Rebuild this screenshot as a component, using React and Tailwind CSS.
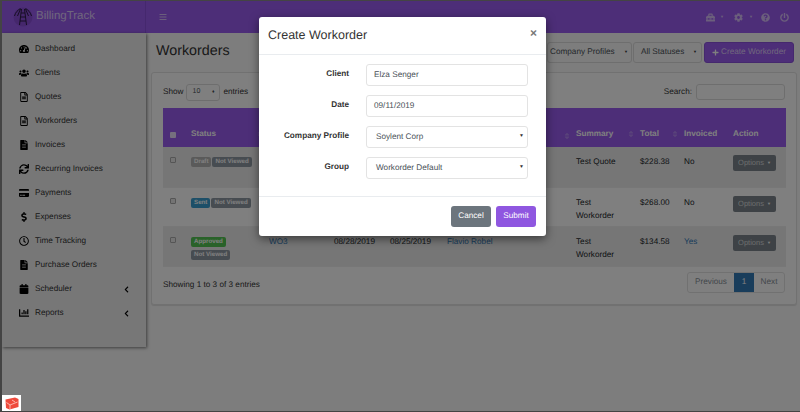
import React from 'react';
import {
  FaTachometerAlt, FaUsers, FaFileAlt, FaRegFileAlt, FaSync, FaCreditCard, FaDollarSign, FaRegClock,
  FaCalendar, FaChartBar, FaChevronLeft, FaBars, FaToolbox, FaCog, FaQuestionCircle,
  FaPowerOff, FaPlus, FaSort,
} from 'react-icons/fa';

const font = { fontFamily: '"Liberation Sans", Arial, sans-serif' };

const navItems = [
  { name: 'Dashboard', icon: FaTachometerAlt },
  { name: 'Clients', icon: FaUsers },
  { name: 'Quotes', icon: FaRegFileAlt },
  { name: 'Workorders', icon: FaRegFileAlt },
  { name: 'Invoices', icon: FaFileAlt },
  { name: 'Recurring Invoices', icon: FaSync },
  { name: 'Payments', icon: FaCreditCard },
  { name: 'Expenses', icon: FaDollarSign },
  { name: 'Time Tracking', icon: FaRegClock },
  { name: 'Purchase Orders', icon: FaFileAlt },
  { name: 'Scheduler', icon: FaCalendar, more: true },
  { name: 'Reports', icon: FaChartBar, more: true },
];

// the first two rows have their id, dates and client behind the modal
const rows = [
  { badges: [['Draft', 'bg-[#b4b4b4]'], ['Not Viewed', 'bg-[#8f99a3]']], key: 'r1', summary: 'Test Quote', total: '$228.38', invoiced: 'No', striped: true, h: 'h-[40px]' },
  { badges: [['Sent', 'bg-[#3a9fd0]'], ['Not Viewed', 'bg-[#8f99a3]']], key: 'r2', summary: 'Test Workorder', total: '$268.00', invoiced: 'No', h: 'h-[39px]' },
  { badges: [['Approved', 'bg-[#52c552]'], ['Not Viewed', 'bg-[#8f99a3]']], key: 'r3', id: 'WO3', a: '08/28/2019', b: '08/25/2019', client: 'Flavio Robel', summary: 'Test Workorder', total: '$134.58', invoiced: 'Yes', striped: true, wrap: true, h: 'h-[40px]' },
];

function Logo() {
  return (
    <svg width="20" height="20" viewBox="0 0 20 20" className="shrink-0">
      <circle cx="10" cy="10" r="9.500" fill="#8a4fd8" />
      <g stroke="#2b1b45" strokeWidth="1" fill="none">
        <path d="M8.500 2 L6.500 18 M11.500 2 L13.500 18 M8 6 H12 M7.500 10 H12.500 M7 14 H13" />
        <path d="M7.500 1.500 C5 3 2.500 5 1.500 9 M12.500 1.500 C15 3 17.500 5 18.500 9 M7.500 2 L4.500 9 M12.500 2 L15.500 9" />
      </g>
    </svg>
  );
}

function Th({ w, children, sort }) {
  return (
    <th className={`${w} p-0 pb-[7px] align-bottom text-left font-bold text-[8.2px]`}>
      <div className="flex items-center justify-between pr-[5px]">
        <span>{children}</span>
        {sort && <FaSort className="text-[8px] text-white/25" />}
      </div>
    </th>
  );
}

function Field({ label, children }) {
  return (
    <div className="flex items-start">
      <label className="w-[90px] text-right text-[8.2px] font-bold text-[#333] pt-[4px]">{label}</label>
      <div className="ml-[17px] w-[162px]">{children}</div>
    </div>
  );
}

function FakeSelect({ value }) {
  return (
    <div className="h-[22px] rounded-[3px] border border-[#e3e3e3] flex items-center justify-between pl-[9px] pr-[3px] text-[8.2px] text-[#495057]">
      <span>{value}</span>
      <span className="text-[5px] text-[#333]">▼</span>
    </div>
  );
}

export default function App() {
  return (
    <div className="relative w-[800px] h-[412px] overflow-hidden bg-[#fafafa] text-[#212529] border-l-2 border-t border-b border-[#444] [text-rendering:geometricPrecision]" style={font}>
      {/* Top bar */}
      <header className="h-[32px] bg-[#9a5cf0] flex items-center text-white">
        <div className="w-[144px] h-full flex items-center pl-[11px] gap-[3px] border-r border-[#8a50dc]">
          <Logo />
          <span className="text-[11.500px] text-white/70">BillingTrack</span>
        </div>
        <FaBars className="ml-[13px] text-[8px] text-white/60" />
        <div className="ml-auto flex items-center pr-[11px] text-[9px] text-white/60">
          <FaToolbox />
          <span className="ml-[5px] text-[4px]">▼</span>
          <FaCog className="ml-[10px]" />
          <span className="ml-[6px] text-[4px]">▼</span>
          <FaQuestionCircle className="ml-[8px]" />
          <FaPowerOff className="ml-[10px]" />
        </div>
      </header>

      <div className="flex">
        {/* Sidebar */}
        <aside className="w-[144px] h-[314px] bg-[#eeeeee] shadow-[1px_1px_3px_rgba(0,0,0,0.5)] pt-[4px] shrink-0 z-10">
          {navItems.map((item) => (
            <div key={item.name} className="h-[24px] flex items-center pl-[14px] pr-[16px] text-[8.2px] text-[#333]">
              <span className="w-[16px] flex justify-center text-[10px] text-black"><item.icon /></span>
              <span className="ml-[3px]">{item.name}</span>
              {item.more && <FaChevronLeft className="ml-auto text-[7px] text-black" />}
            </div>
          ))}
        </aside>

        {/* Content */}
        <main className="flex-1 min-w-0 pl-[5px] pr-[3px]">
          <div className="h-[36px] flex items-center pt-[2px] pl-[5px]">
            <h1 className="text-[14.300px] text-[#333] font-normal">Workorders</h1>
            <div className="ml-auto flex items-center text-[8.2px] text-[#495057] mr-[3px]">
              <div className="w-[85px] h-[21px] rounded-[3px] border border-[#ddd] flex items-center justify-between pl-[2px] pr-[3px]">
                <span>Company Profiles</span><span className="text-[4px] text-[#333]">▼</span>
              </div>
              <div className="ml-[1px] w-[69px] h-[21px] rounded-[3px] border border-[#ddd] flex items-center justify-between pl-[7px] pr-[4px]">
                <span>All Statuses</span><span className="text-[4px] text-[#333]">▼</span>
              </div>
              <div className="ml-[2px] w-[90px] h-[21px] rounded-[3px] bg-[#9a5cf0] border border-[#8a50dc] flex items-center justify-center gap-[2px] text-white/70">
                <FaPlus className="text-[7px] text-white" /><span>Create Workorder</span>
              </div>
            </div>
          </div>

          <section className="h-[233px] rounded-[3px] border border-[#e3e3e3] bg-white px-[11px] pt-[11px] mt-[3px] shadow-[0_1px_1px_rgba(0,0,0,0.1)]">
            <div className="h-[24px] flex items-start justify-between text-[8.2px] text-[#333]">
              <div className="flex items-center gap-[3px]">
                <span>Show</span>
                <div className="w-[34px] h-[17px] rounded-[3px] border border-[#ddd] flex items-center justify-between px-[5px] text-[7px] text-[#495057]">
                  <span>10</span><span className="text-[5px]">♦</span>
                </div>
                <span>entries</span>
              </div>
              <div className="flex items-center gap-[4px]">
                <span>Search:</span>
                <div className="w-[89px] h-[16px] rounded-[3px] border border-[#ddd]" />
              </div>
            </div>

            <table className="w-[623px] table-fixed border-collapse text-[8.2px] text-[#212529]">
              <thead className="bg-[#9a5cf0] text-white">
                <tr className="h-[39px]">
                  <th className="w-[28px] p-0 pb-[9px] align-bottom"><div className="ml-[7px] w-[6px] h-[6px] rounded-[1px] bg-white/80" /></th>
                  <Th w="w-[78px]" sort>Status</Th>
                  <Th w="w-[65px]" />
                  <Th w="w-[56px]" />
                  <Th w="w-[57px]" />
                  <Th w="w-[129px]" sort />
                  <Th w="w-[64px]" sort>Summary</Th>
                  <Th w="w-[44px]" sort>Total</Th>
                  <Th w="w-[49px]">Invoiced</Th>
                  <Th w="w-[53px]">Action</Th>
                </tr>
              </thead>
              <tbody>
                {rows.map((row) => (
                  <tr key={row.key} className={`${row.h} border-b border-[#eee] align-top ${row.striped ? 'bg-[#ededed]' : ''}`}>
                    <td className="p-0 pt-[10px]"><div className="ml-[7px] w-[6px] h-[6px] rounded-[1px] border border-[#aaa] bg-[#e8e8e8]" /></td>
                    <td className="p-0 pt-[10px]">
                      <div className={`flex ${row.wrap ? 'flex-col items-start gap-[3px]' : 'gap-[1px]'} text-[6.200px] font-bold text-white leading-none`}>
                        {row.badges.map(([t, c]) => (
                          <span key={t} className={`${c} rounded-[2px] px-[3px] py-[2px] whitespace-nowrap`}>{t}</span>
                        ))}
                      </div>
                    </td>
                    <td className="p-0 pt-[9px] text-[#337ab7]">{row.id}</td>
                    <td className="p-0 pt-[9px]">{row.a}</td>
                    <td className="p-0 pt-[9px]">{row.b}</td>
                    <td className="p-0 pt-[9px] text-[#337ab7]">{row.client}</td>
                    <td className="p-0 pt-[8px] leading-[13px] pr-[18px]">{row.summary}</td>
                    <td className="p-0 pt-[9px]">{row.total}</td>
                    <td className={`p-0 pt-[9px] ${row.invoiced === 'Yes' ? 'text-[#337ab7]' : ''}`}>{row.invoiced}</td>
                    <td className="p-0 pt-[8px]">
                      <div className="w-[43px] h-[16px] rounded-[2px] bg-[#7d858c] text-white/70 text-[7.500px] flex items-center justify-center gap-[3px]">
                        <span>Options</span><span className="text-[4px] text-white">▼</span>
                      </div>
                    </td>
                  </tr>
                ))}
              </tbody>
            </table>

            <div className="flex items-start justify-between mt-[5px] text-[8.2px]">
              <span className="text-[#333] pt-[7px]">Showing 1 to 3 of 3 entries</span>
              <div className="flex h-[21px] rounded-[3px] border border-[#e3e3e3] text-[#868e96]">
                <span className="w-[46px] flex items-center justify-center">Previous</span>
                <span className="w-[20px] bg-[#337ab7] text-white flex items-center justify-center">1</span>
                <span className="w-[30px] flex items-center justify-center">Next</span>
              </div>
            </div>
          </section>
        </main>
      </div>

      {/* Backdrop */}
      <div className="absolute inset-0 bg-black/50 z-20" />

      {/* Laravel debugbar tab */}
      <div className="absolute left-0 bottom-0 w-[19px] h-[16px] bg-white flex items-center justify-center z-40">
        <svg width="14" height="13" viewBox="0 0 14 13">
          <path d="M0.500 2.500 L10 0.500 L13.500 2 L13.500 10 L4.500 12.500 L1 11 Z" fill="#ef4a3c" />
          <path d="M1.500 5.500 L5 8 L12.500 5 M5 8 L5 12 M7 3 L10 5" stroke="#ffd0c8" strokeWidth="0.8" fill="none" />
        </svg>
      </div>

      {/* Create Workorder modal */}
      <div className="absolute left-[257px] top-[16px] w-[287px] h-[219px] bg-white rounded-[3px] shadow-[0_3px_10px_rgba(0,0,0,0.5)] z-30 flex flex-col">
        <div className="h-[38px] border-b border-[#e9ecef] flex items-center justify-between pl-[9px] pr-[9px]">
          <h2 className="text-[12.500px] font-normal text-[#333]">Create Workorder</h2>
          <span className="text-[12px] font-bold text-[#777] leading-none -mt-[6px]">×</span>
        </div>
        <div className="flex-1 pt-[9px] flex flex-col gap-[9px]">
          <Field label="Client">
            <div className="h-[22px] rounded-[3px] border border-[#e3e3e3] flex items-center pl-[7px] text-[8.2px] text-[#495057]">Elza Senger</div>
          </Field>
          <Field label="Date">
            <div className="h-[22px] rounded-[3px] border border-[#e3e3e3] flex items-center pl-[7px] text-[8.2px] text-[#495057]">09/11/2019</div>
          </Field>
          <Field label="Company Profile"><FakeSelect value="Soylent Corp" /></Field>
          <Field label="Group"><FakeSelect value="Workorder Default" /></Field>
        </div>
        <div className="h-[40px] border-t border-[#e9ecef] flex items-center justify-end gap-[5px] pr-[10px] text-[8.2px] text-white">
          <div className="w-[40px] h-[21px] rounded-[3px] bg-[#6c757d] flex items-center justify-center">Cancel</div>
          <div className="w-[40px] h-[21px] rounded-[3px] bg-[#8f57e0] flex items-center justify-center">Submit</div>
        </div>
      </div>
    </div>
  );
}
